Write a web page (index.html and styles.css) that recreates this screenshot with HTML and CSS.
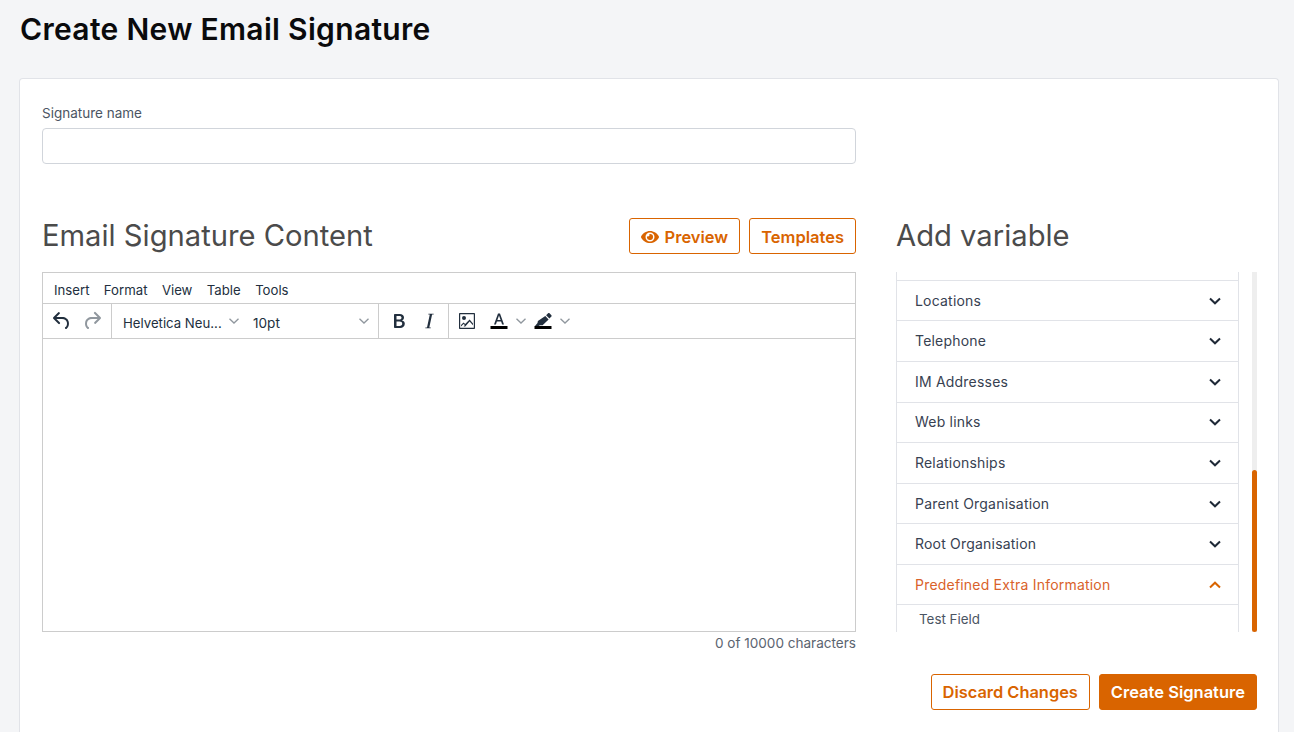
FILE: index.html
```html
<!DOCTYPE html>
<html lang="en">
<head>
<meta charset="utf-8">
<title>Create New Email Signature</title>
<link rel="stylesheet" href="styles.css">
</head>
<body>
<h1 class="page-title">Create New Email Signature</h1>
<main class="card">
  <div class="name-field">
    <label class="field-label" for="sig">Signature name</label>
    <input class="text-input" id="sig" type="text">
  </div>
  <div class="columns">
    <section class="left">
      <div class="section-head">
        <h2 class="section-title">Email Signature Content</h2>
        <div class="head-actions">
          <button class="btn btn-outline btn-preview">
            <svg class="eye" viewBox="0 0 576 512" width="18" height="16"><path fill="currentColor" d="M572.5 241.4C518.3 135.6 410.9 64 288 64S57.7 135.6 3.5 241.4a32.4 32.4 0 0 0 0 29.2C57.7 376.4 165.1 448 288 448s230.3-71.600 284.500-177.400a32.400 32.400 0 0 0 0-29.200zM288 400a144 144 0 1 1 144-144 143.900 143.900 0 0 1-144 144zm0-240a95.300 95.300 0 0 0-25.300 3.800 47.900 47.900 0 0 1-66.900 66.900A95.800 95.800 0 1 0 288 160z"/></svg>
            Preview
          </button>
          <button class="btn btn-outline">Templates</button>
        </div>
      </div>
      <div class="editor">
        <div class="menubar">
          <span>Insert</span><span>Format</span><span>View</span><span>Table</span><span>Tools</span>
        </div>
        <div class="toolbar">
          <div class="tool-group group-history">
            <svg class="tool-icon" viewBox="0 0 24 24" width="24" height="24"><path fill="#222f3e" d="M6.400 8H12c3.700 0 6.200 2 6.800 5.100.6 2.700-.4 5.600-2.300 6.800a1 1 0 0 1-1-1.800c1.100-.6 1.800-2.700 1.400-4.600-.5-2.100-2.100-3.500-4.900-3.500H6.400l3.300 3.300a1 1 0 1 1-1.400 1.400l-5-5a1 1 0 0 1 0-1.400l5-5a1 1 0 0 1 1.400 1.400L6.400 8z"/></svg>
            <svg class="tool-icon" viewBox="0 0 24 24" width="24" height="24"><path fill="#222f3e" fill-opacity=".5" d="M17.600 10H12c-2.800 0-4.400 1.400-4.900 3.500-.4 2 .3 4 1.400 4.600a1 1 0 1 1-1 1.800c-2-1.200-2.900-4.100-2.300-6.800.6-3 3.100-5.100 6.800-5.100h5.600l-3.300-3.300a1 1 0 1 1 1.400-1.400l5 5a1 1 0 0 1 0 1.400l-5 5a1 1 0 0 1-1.400-1.400l3.300-3.300z"/></svg>
          </div>
          <div class="tool-group group-font">
            <div class="select select-family"><span>Helvetica Neu...</span><svg class="caret" viewBox="0 0 10 10" width="10" height="10"><path d="M.5 2.700 5 7l4.500-4.300" fill="none" stroke="#222f3e" stroke-opacity=".5" stroke-width="1.300"/></svg></div>
            <div class="select select-size"><span>10pt</span><svg class="caret" viewBox="0 0 10 10" width="10" height="10"><path d="M.5 2.700 5 7l4.500-4.300" fill="none" stroke="#222f3e" stroke-opacity=".5" stroke-width="1.300"/></svg></div>
          </div>
          <div class="tool-group group-style">
            <svg class="tool-icon" viewBox="0 0 24 24" width="24" height="24"><path fill="#222f3e" fill-rule="evenodd" d="M7.800 19c-.5 0-.8-.3-.8-.8V5.800c0-.5.300-.8.800-.8h4.900c2.600 0 4.300 1.300 4.300 3.500 0 1.500-.8 2.600-2 3 1.700.3 2.800 1.600 2.800 3.300 0 2.500-1.900 4.200-4.700 4.200H7.800zm1.700-8.400h2.700c1.500 0 2.300-.6 2.300-1.800s-.8-1.800-2.200-1.800H9.500v3.600zm0 6.300h3.100c1.700 0 2.600-.7 2.600-2.100s-1-2.200-2.800-2.200H9.500v4.300z"/></svg>
            <svg class="tool-icon" viewBox="0 0 24 24" width="24" height="24"><path fill="#222f3e" d="M16.700 4.700l-.1.900h-1.500l-2.800 12.800h1.500l-.1.900H8.300l.1-.9H10l2.800-12.800h-1.500l.1-.9z"/></svg>
          </div>
          <div class="tool-group group-insert">
            <svg class="tool-icon" viewBox="0 0 24 24" width="24" height="24"><path fill="#222f3e" fill-rule="evenodd" d="M5 4h14c.6 0 1 .4 1 1v14c0 .6-.4 1-1 1H5c-.6 0-1-.4-1-1V5c0-.6.4-1 1-1zm.2 1.200v13.600h13.600V5.200H5.200zM9 7a2 2 0 1 1 0 4 2 2 0 0 1 0-4zm5.600 3.600 3.400 3.900v1.800l-3.400-3.900-4.300 5H6v-1.500l2.500-2.500 1.700 1.500 4.400-4.300zM6 17.500l2.500-2.500 1.400 1.100-1.300 1.400H6z"/></svg>
            <div class="color-tool">
              <svg class="tool-icon" viewBox="0 0 24 24" width="24" height="24"><path fill="#222f3e" d="M7 15.500 11 4.500h2l4 11h-1.900l-1-2.900H9.900l-1 2.900H7zm3.400-4.400h3.200l-1.600-4.600-1.600 4.600z"/><rect x="3.500" y="17" width="17" height="3" fill="#000"/></svg>
              <svg class="caret" viewBox="0 0 10 10" width="10" height="10"><path d="M.5 2.700 5 7l4.500-4.300" fill="none" stroke="#222f3e" stroke-opacity=".5" stroke-width="1.300"/></svg>
            </div>
            <div class="color-tool">
              <svg class="tool-icon" viewBox="0 0 24 24" width="24" height="24"><path fill="#222f3e" d="M17.100 4.300c.4-.4 1-.4 1.400 0l1.900 1.900c.4.400.4 1 0 1.400l-2 2-3.300-3.300 2-2zM14.300 7.100l3.300 3.300-6 5.800H8.900L7.600 17H4l2.500-3 .4-2.100 7.400-4.800z"/><rect x="3.500" y="17" width="17" height="3" fill="#000"/></svg>
              <svg class="caret" viewBox="0 0 10 10" width="10" height="10"><path d="M.5 2.700 5 7l4.500-4.300" fill="none" stroke="#222f3e" stroke-opacity=".5" stroke-width="1.300"/></svg>
            </div>
          </div>
        </div>
        <div class="editor-body"></div>
      </div>
      <div class="char-count">0 of 10000 characters</div>
    </section>
    <aside class="right">
      <div class="section-head">
        <h2 class="section-title">Add variable</h2>
      </div>
      <div class="var-panel">
        <div class="var-list">
          <div class="var-top"></div>
          <div class="var-row"><span>Locations</span><svg class="chev" viewBox="0 0 12 8" width="12" height="8"><path d="M1 1.500 6 6.300l5-4.800" fill="none" stroke="currentColor" stroke-width="2"/></svg></div>
          <div class="var-row"><span>Telephone</span><svg class="chev" viewBox="0 0 12 8" width="12" height="8"><path d="M1 1.500 6 6.300l5-4.800" fill="none" stroke="currentColor" stroke-width="2"/></svg></div>
          <div class="var-row"><span>IM Addresses</span><svg class="chev" viewBox="0 0 12 8" width="12" height="8"><path d="M1 1.500 6 6.300l5-4.800" fill="none" stroke="currentColor" stroke-width="2"/></svg></div>
          <div class="var-row"><span>Web links</span><svg class="chev" viewBox="0 0 12 8" width="12" height="8"><path d="M1 1.500 6 6.300l5-4.800" fill="none" stroke="currentColor" stroke-width="2"/></svg></div>
          <div class="var-row"><span>Relationships</span><svg class="chev" viewBox="0 0 12 8" width="12" height="8"><path d="M1 1.500 6 6.300l5-4.800" fill="none" stroke="currentColor" stroke-width="2"/></svg></div>
          <div class="var-row"><span>Parent Organisation</span><svg class="chev" viewBox="0 0 12 8" width="12" height="8"><path d="M1 1.500 6 6.300l5-4.800" fill="none" stroke="currentColor" stroke-width="2"/></svg></div>
          <div class="var-row"><span>Root Organisation</span><svg class="chev" viewBox="0 0 12 8" width="12" height="8"><path d="M1 1.500 6 6.300l5-4.800" fill="none" stroke="currentColor" stroke-width="2"/></svg></div>
          <div class="var-row var-open"><span>Predefined Extra Information</span><svg class="chev" viewBox="0 0 12 8" width="12" height="8"><path d="M1 6.500 6 1.700l5 4.800" fill="none" stroke="currentColor" stroke-width="2"/></svg></div>
          <div class="var-item">Test Field</div>
        </div>
        <div class="scroll-track"><div class="scroll-thumb"></div></div>
      </div>
    </aside>
  </div>
  <div class="form-actions">
    <button class="btn btn-outline btn-discard">Discard Changes</button>
    <button class="btn btn-solid">Create Signature</button>
  </div>
</main>
</body>
</html>
```
FILE: styles.css
```css
* { box-sizing: border-box; }
html, body { height: 100%; }
body {
  margin: 0;
  padding: 0 15px 0 19px;
  background: #f4f5f7;
  font-family: Inter, "Liberation Sans", sans-serif;
  color: #111827;
  overflow: hidden;
}
.page-title {
  margin: 0;
  padding: 11px 0 0 1px;
  height: 78px;
  font-size: 30px;
  line-height: 36px;
  font-weight: 600;
  letter-spacing: .32px;
  color: #0a0a0c;
}
.card {
  background: #fff;
  border: 1px solid #e1e3e8;
  border-bottom: 0;
  border-radius: 4px 4px 0 0;
  padding: 26px 21px 0 22px;
  height: 654px;
}
.name-field { width: 814px; }
.field-label {
  display: block;
  font-size: 13.5px;
  line-height: 17px;
  color: #4b5563;
  margin-bottom: 6px;
}
.text-input {
  display: block;
  width: 100%;
  height: 36px;
  border: 1px solid #d1d5db;
  border-radius: 4px;
  background: #fff;
}
.columns {
  display: flex;
  gap: 40px;
  margin-top: 54px;
}
.left { width: 814px; flex: none; }
.right { width: 361px; flex: none; }
.section-head {
  display: flex;
  align-items: center;
  justify-content: space-between;
  height: 36px;
  margin-bottom: 18px;
}
.section-title {
  margin: 0;
  font-size: 29.2px;
  line-height: 36px;
  font-weight: 400;
  color: #4b4b4b;
}
.head-actions { display: flex; gap: 9px; }
.btn {
  display: inline-flex;
  align-items: center;
  justify-content: center;
  height: 36px;
  padding: 1px 11px 0;
  border-radius: 3px;
  font-family: inherit;
  font-size: 16.5px;
  font-weight: 600;
  cursor: pointer;
}
.btn-outline {
  background: #fff;
  border: 1px solid #d96400;
  color: #d96400;
}
.btn-solid {
  background: #d96400;
  border: 1px solid #d96400;
  color: #fff;
}
.btn-discard { font-size: 16.4px; }
.eye { margin-right: 6px; }
.editor {
  border: 1px solid #cccccc;
  height: 360px;
  display: flex;
  flex-direction: column;
}
.menubar {
  display: flex;
  gap: 14.4px;
  align-items: center;
  height: 31px;
  padding: 4px 0 0 11px;
  border-bottom: 1px solid #cccccc;
  font-size: 13.2px;
  color: #222f3e;
}
.toolbar {
  display: flex;
  height: 35px;
  border-bottom: 1px solid #cccccc;
}
.tool-group {
  display: flex;
  align-items: center;
  border-right: 1px solid #cccccc;
}
.group-history { width: 69px; padding-left: 7px; gap: 6px; }
.group-font { width: 267px; padding-left: 11px; }
.group-style { width: 70px; padding-left: 8px; gap: 6px; }
.group-insert { border-right: 0; padding-left: 6px; }
.tool-icon { flex: none; display: block; }
.select {
  display: flex;
  align-items: center;
  justify-content: space-between;
  padding-top: 3px;
  font-size: 13.2px;
  color: #222f3e;
}
.select-family { width: 116px; }
.select-size { width: 116px; margin-left: 14px; font-size: 13.6px; }
.select .caret { margin-top: -3px; }
.color-tool { display: flex; align-items: center; gap: 5px; margin-left: 8px; }
.color-tool + .color-tool { margin-left: 5px; }
.editor-body { flex: 1; }
.char-count {
  margin-top: 3px;
  text-align: right;
  font-size: 13.55px;
  line-height: 16px;
  color: #5b6470;
}
.var-panel {
  display: flex;
  justify-content: space-between;
  height: 360px;
}
.var-list {
  width: 343px;
  height: 360px;
  overflow: hidden;
  border-left: 1px solid #e1e3e8;
  border-right: 1px solid #e1e3e8;
}
.var-top { height: 8.8px; border-bottom: 1px solid #e1e3e8; }
.var-row {
  display: flex;
  align-items: center;
  justify-content: space-between;
  height: 40.59px;
  padding: 0 17px .8px 18px;
  border-bottom: 1px solid #e1e3e8;
  font-size: 14px;
  letter-spacing: .2px;
  color: #374151;
}
.chev { color: #1f2937; margin-top: 1px; }
.var-open { color: #d9622b; }
.var-open .chev { color: #d96400; }
.var-item {
  padding: 6px 0 0 22px;
  font-size: 13.4px;
  line-height: 17px;
  color: #4b5563;
}
.scroll-track {
  width: 5px;
  height: 360px;
  background: #eeeeee;
  display: flex;
  align-items: flex-end;
}
.scroll-thumb {
  width: 100%;
  height: 162px;
  background: #d96400;
  border-radius: 3px;
}
.form-actions {
  display: flex;
  justify-content: flex-end;
  gap: 9px;
  margin-top: 23px;
}
.form-actions .btn { padding-top: 0; }
```
